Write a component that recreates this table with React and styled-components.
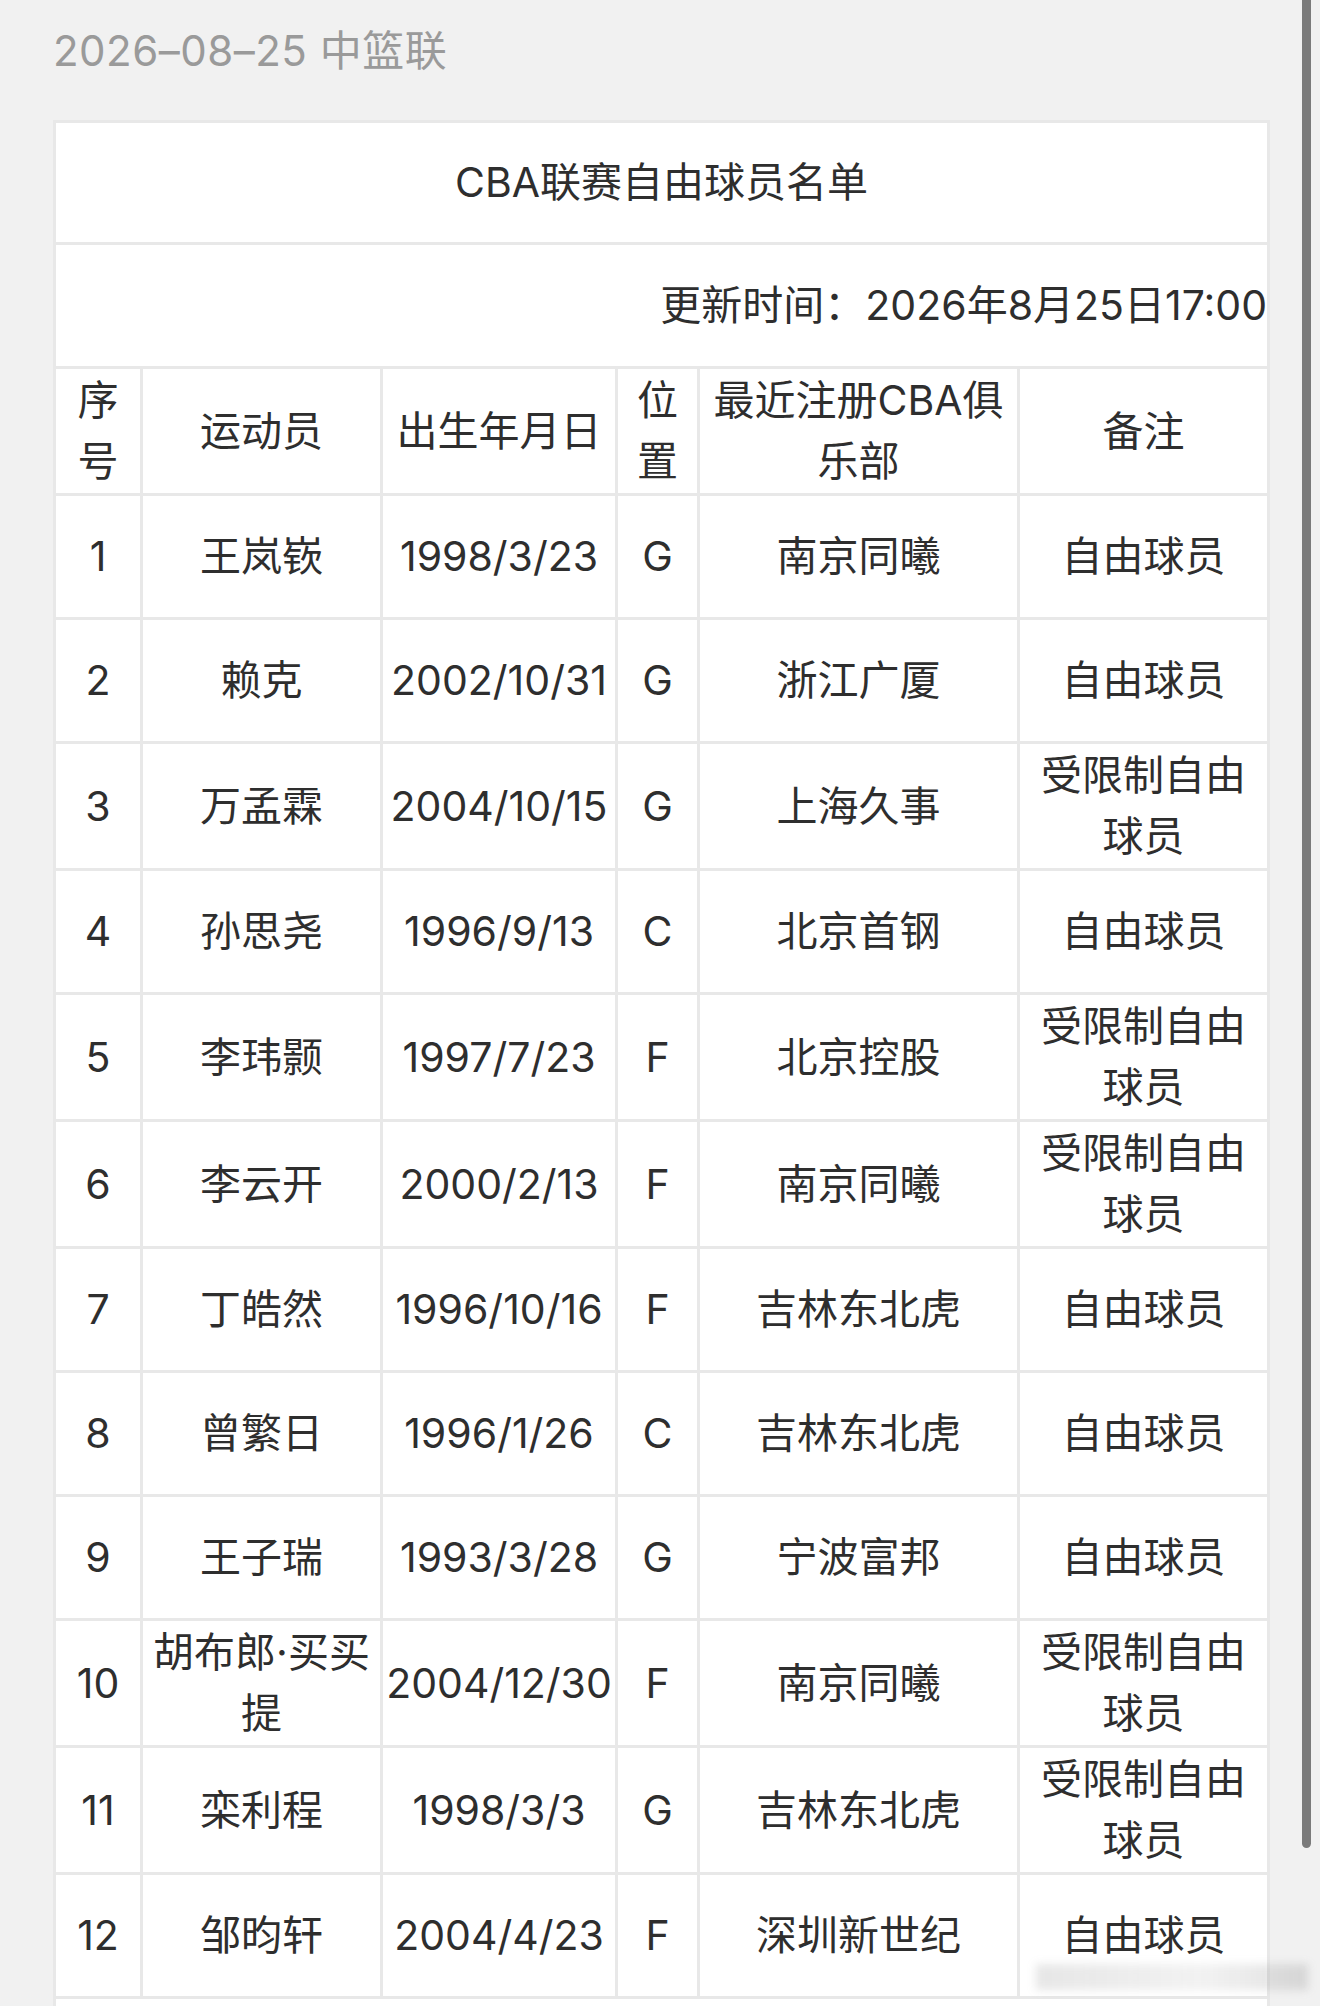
import React from 'react';
import styled, { createGlobalStyle } from 'styled-components';

const GlobalStyle = createGlobalStyle`
  html, body {
    margin: 0;
    padding: 0;
    background: #f1f1f1;
    overflow: hidden;
  }
  body {
    font-family: Inter, "Noto Sans CJK SC", sans-serif;
  }
`;

const Page = styled.div`
  position: relative;
  width: 1320px;
  height: 2006px;
  overflow: hidden;
  background: #f1f1f1;
`;

const DateLine = styled.div`
  padding: 22px 0 0 53px;
  font-size: 42px;
  line-height: 58px;
  color: #9a9a9a;
  letter-spacing: 0.5px;
`;

const Sheet = styled.table`
  margin: 40px 0 0 53px;
  width: 1214px;
  table-layout: fixed;
  border-collapse: collapse;
  background: #fff;
  color: #2e2e2e;
  font-size: 41px;
`;

const Row = styled.tr`
  height: ${props => props.h || 124}px;
`;

const Cell = styled.td`
  border: 3px solid #e8e8e8;
  padding: 1px 0;
  text-align: ${props => props.align || 'center'};
  vertical-align: middle;
  line-height: 61px;
  white-space: nowrap;
`;

const Scrollbar = styled.div`
  position: absolute;
  left: 1302px;
  top: 0;
  width: 9px;
  height: 1848px;
  background: #7b7b7b;
  border-radius: 0 0 5px 5px;
`;

const Watermark = styled.div`
  position: absolute;
  left: 1036px;
  top: 1964px;
  width: 272px;
  height: 26px;
  background: linear-gradient(90deg, rgba(120, 120, 120, 0.18), rgba(150, 150, 150, 0.12) 60%, rgba(110, 110, 110, 0.2));
  filter: blur(4px);
`;

const cols = [87, 240, 235, 82, 320, 250];

const players = [
  ['1', '王岚嵚', '1998/3/23', 'G', '南京同曦', '自由球员'],
  ['2', '赖克', '2002/10/31', 'G', '浙江广厦', '自由球员'],
  ['3', '万孟霖', '2004/10/15', 'G', '上海久事', '受限制自由\n球员'],
  ['4', '孙思尧', '1996/9/13', 'C', '北京首钢', '自由球员'],
  ['5', '李玮颢', '1997/7/23', 'F', '北京控股', '受限制自由\n球员'],
  ['6', '李云开', '2000/2/13', 'F', '南京同曦', '受限制自由\n球员'],
  ['7', '丁皓然', '1996/10/16', 'F', '吉林东北虎', '自由球员'],
  ['8', '曾繁日', '1996/1/26', 'C', '吉林东北虎', '自由球员'],
  ['9', '王子瑞', '1993/3/28', 'G', '宁波富邦', '自由球员'],
  ['10', '胡布郎·买买\n提', '2004/12/30', 'F', '南京同曦', '受限制自由\n球员'],
  ['11', '栾利程', '1998/3/3', 'G', '吉林东北虎', '受限制自由\n球员'],
  ['12', '邹昀轩', '2004/4/23', 'F', '深圳新世纪', '自由球员'],
];

const head = ['序\n号', '运动员', '出生年月日', '位\n置', '最近注册CBA俱\n乐部', '备注'];

const Lines = ({ text }) =>
  text.split('\n').map((line, i) => (
    <React.Fragment key={i}>
      {i > 0 && <br />}
      {line}
    </React.Fragment>
  ));

export default function App() {
  return (
    <Page>
      <GlobalStyle />
      <DateLine>2026–08–25 中篮联</DateLine>
      <Sheet>
        <colgroup>
          {cols.map((w, i) => (
            <col key={i} style={{ width: w }} />
          ))}
        </colgroup>
        <tbody>
          <Row h={122}>
            <Cell colSpan={6}>CBA联赛自由球员名单</Cell>
          </Row>
          <Row h={124}>
            <Cell colSpan={6} align="right">更新时间：2026年8月25日17:00</Cell>
          </Row>
          <Row h={127}>
            {head.map((t, i) => (
              <Cell key={i}>
                <Lines text={t} />
              </Cell>
            ))}
          </Row>
          {players.map(p => (
            <Row key={p[0]}>
              {p.map((t, i) => (
                <Cell key={i}>
                  <Lines text={t} />
                </Cell>
              ))}
            </Row>
          ))}
          <Row h={60}>
            <Cell colSpan={6} />
          </Row>
        </tbody>
      </Sheet>
      <Watermark />
      <Scrollbar />
    </Page>
  );
}
